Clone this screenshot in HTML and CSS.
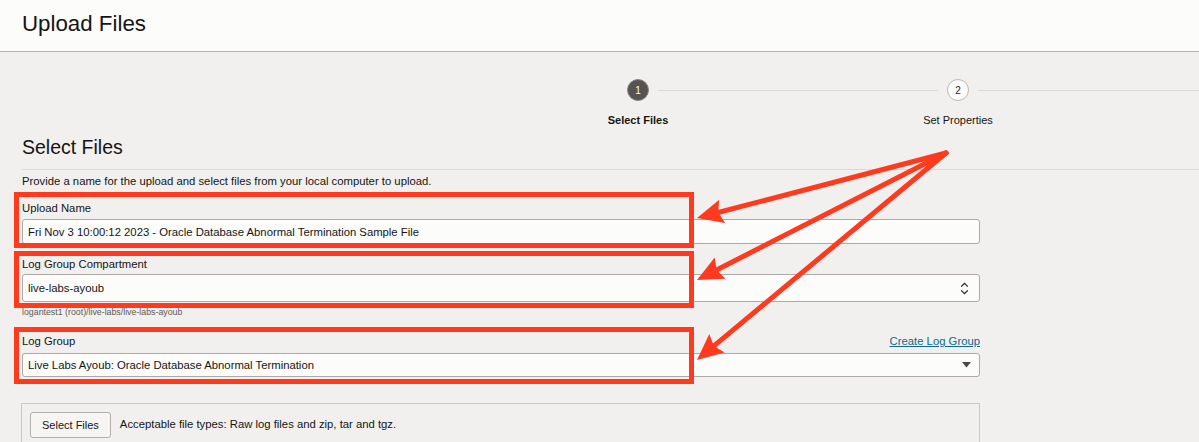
FILE: index.html
```html
<!DOCTYPE html>
<html lang="en">
<head>
<meta charset="utf-8">
<title>Upload Files</title>
<link rel="stylesheet" href="styles.css">
</head>
<body>
<header class="page-header">
  <h1 class="page-title">Upload Files</h1>
</header>
<main class="content">
  <ol class="train">
    <li class="step step-current">
      <div class="track"><span class="seg seg-left seg-hidden"></span><span class="dot">1</span><span class="seg seg-right"></span></div>
      <span class="step-label">Select Files</span>
    </li>
    <li class="step">
      <div class="track"><span class="seg seg-left seg-fixed"></span><span class="dot">2</span><span class="seg seg-right seg-tail"></span></div>
      <span class="step-label">Set Properties</span>
    </li>
  </ol>

  <h2 class="section-title">Select Files</h2>
  <p class="intro">Provide a name for the upload and select files from your local computer to upload.</p>

  <div class="form">
    <div class="field field-name">
      <label class="label">Upload Name</label>
      <div class="control ctl-name">Fri Nov 3 10:00:12 2023 - Oracle Database Abnormal Termination Sample File</div>
    </div>

    <div class="field field-comp">
      <label class="label">Log Group Compartment</label>
      <div class="control ctl-comp">
        <span>live-labs-ayoub</span>
        <svg class="updown" width="9" height="13" viewBox="0 0 9 13"><path d="M1.2 4.6 L4.5 1.3 L7.8 4.6 M1.2 8.4 L4.5 11.7 L7.8 8.4" fill="none" stroke="#2a2725" stroke-width="1.3"/></svg>
      </div>
      <div class="helper">logantest1 (root)/live-labs/live-labs-ayoub</div>
    </div>

    <div class="field field-group">
      <div class="label-row">
        <label class="label">Log Group</label>
        <a class="link" href="#">Create Log Group</a>
      </div>
      <div class="control ctl-group">
        <span>Live Labs Ayoub: Oracle Database Abnormal Termination</span>
        <svg class="caret" width="9" height="6" viewBox="0 0 9 6"><path d="M0 0 H9 L4.5 5.5 Z" fill="#4d4845"/></svg>
      </div>
    </div>

    <div class="dropzone">
      <button class="btn" type="button">Select Files</button>
      <span class="types">Acceptable file types: Raw log files and zip, tar and tgz.</span>
    </div>
  </div>
</main>

<svg class="annotations" width="1199" height="442" viewBox="0 0 1199 442">
  <defs>
    <marker id="head" markerUnits="userSpaceOnUse" viewBox="0 0 26 24" refX="14" refY="12" markerWidth="26" markerHeight="24" orient="auto">
      <path d="M0 0 L26 12 L0 24 L4 12 Z" fill="#ff3a1f"/>
    </marker>
  </defs>
  <g fill="none" stroke="#ff3a1f" stroke-width="5">
    <rect x="16.5" y="194.5" width="675" height="51"/>
    <rect x="16.5" y="253.5" width="675" height="52"/>
    <rect x="16.5" y="329.5" width="675" height="52"/>
  </g>
  <g stroke="#ff3a1f" stroke-width="5" stroke-linecap="round">
    <line x1="946" y1="153" x2="708.6" y2="215" marker-end="url(#head)"/>
    <line x1="946" y1="153" x2="707.7" y2="274.5" marker-end="url(#head)"/>
    <line x1="946" y1="153" x2="706.2" y2="352.3" marker-end="url(#head)"/>
  </g>
</svg>
</body>
</html>
```

FILE: styles.css
```css
* { box-sizing: border-box; }

html, body {
  margin: 0;
  padding: 0;
}

body {
  position: relative;
  width: 1199px;
  height: 442px;
  overflow: hidden;
  background: #f1f0ee;
  font-family: "Liberation Sans", Arial, sans-serif;
  color: #161513;
}

.page-header {
  height: 52px;
  background: #fcfcfb;
  border-bottom: 1px solid #b9b2ab;
  padding: 11px 0 0 22px;
}

.page-title {
  margin: 0;
  font-size: 22.3px;
  line-height: 25px;
  font-weight: normal;
  color: #161513;
}

.content {
  padding-left: 22px;
}

/* stepper / train */
.train {
  list-style: none;
  margin: 27px 0 0 456px;
  padding: 0;
  display: flex;
}

.step {
  width: 320px;
  flex: none;
  display: flex;
  flex-direction: column;
  align-items: center;
}

.track {
  width: 100%;
  display: flex;
  align-items: center;
  height: 22px;
}

.seg {
  flex: 1;
  height: 1px;
  background: #dcd9d5;
}

.seg-left { margin-right: 9px; }
.seg-right { margin-left: 9px; }
.seg-fixed { flex: none; width: 140px; }
.seg-tail { margin-right: -160px; }

.seg-hidden { background: transparent; }

.dot {
  width: 22px;
  height: 22px;
  border-radius: 50%;
  flex: none;
  display: flex;
  align-items: center;
  justify-content: center;
  font-size: 10px;
  background: #fcfcfb;
  border: 1px solid #bcb8b4;
  color: #2a2725;
}

.step-current .dot {
  background: #575350;
  border: 1.5px solid #8c8580;
  color: #ffffff;
}

.step-label {
  margin-top: 13px;
  font-size: 11px;
  line-height: 13px;
  color: #161513;
}

.step-current .step-label { font-weight: bold; }

.section-title {
  margin: 8px 0 0;
  padding-bottom: 10px;
  font-size: 19.5px;
  line-height: 24px;
  font-weight: normal;
  border-bottom: 1px solid #dcd9d5;
}

.intro {
  margin: 4px 0 0;
  font-size: 11.3px;
  line-height: 14px;
}

/* form */
.form {
  width: 958px;
}

.field { display: flex; flex-direction: column; }

.field-name { margin-top: 13px; }
.field-comp { margin-top: 13px; }
.field-group { margin-top: 16px; }

.label {
  font-size: 11.3px;
  line-height: 14px;
}

.label-row {
  display: flex;
  justify-content: space-between;
  align-items: baseline;
}

.link {
  font-size: 11.3px;
  line-height: 14px;
  color: #0c6a93;
  text-decoration: underline;
}

.control {
  background: #fcfcfb;
  border: 1px solid #aea9a4;
  border-radius: 3px;
  font-size: 11.3px;
  padding: 0 9px 0 5px;
  display: flex;
  align-items: center;
  justify-content: space-between;
}

.ctl-name { margin-top: 4px; height: 25px; }
.ctl-comp { margin-top: 3px; height: 28px; }
.ctl-group { margin-top: 5px; height: 24px; padding-right: 8px; }

.updown { margin-right: 1px; }

.helper {
  margin-top: 5px;
  font-size: 8.8px;
  line-height: 11px;
  color: #5f5a56;
}

.dropzone {
  margin-top: 26px;
  margin-left: -1px;
  border: 1px solid #cbc7c3;
  border-bottom: none;
  padding: 8px;
  display: flex;
  align-items: flex-start;
  gap: 9px;
  height: 60px;
}

.btn {
  font-family: "Liberation Sans", Arial, sans-serif;
  font-size: 11px;
  color: #161513;
  background: #f6f5f3;
  border: 1px solid #b3aea9;
  border-radius: 3px;
  height: 26px;
  padding: 0 11px;
}

.types {
  font-size: 11.3px;
  line-height: 14px;
  margin-top: 5px;
}

.annotations {
  position: absolute;
  left: 0;
  top: 0;
  pointer-events: none;
}
```
